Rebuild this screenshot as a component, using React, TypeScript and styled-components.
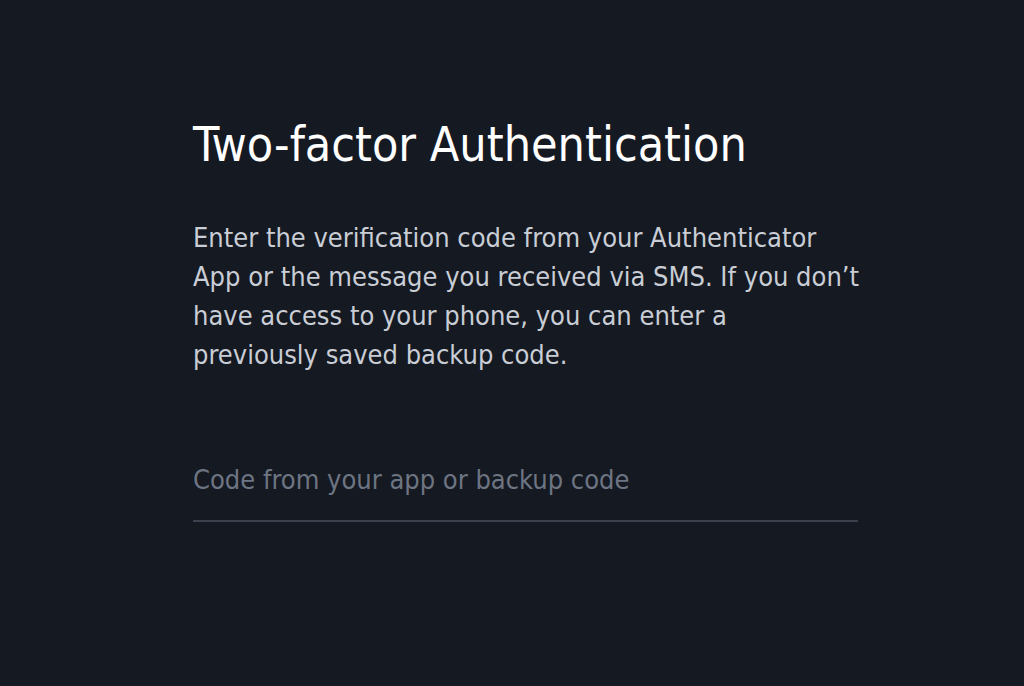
import React from "react";
import styled, { createGlobalStyle } from "styled-components";

const Global = createGlobalStyle`
  html, body { margin: 0; padding: 0; background: #151922; }
  body { font-family: "DejaVu Sans Condensed", "DejaVu Sans", sans-serif; }
  * { box-sizing: border-box; }
`;

const Page = styled.main`
  min-height: 686px;
  padding: 114px 0 0 193px;
`;

const Panel = styled.section`
  width: 665px;
  display: flex;
  flex-direction: column;
`;

const Title = styled.h1`
  margin: 0;
  font-size: 48px;
  line-height: 60px;
  font-weight: 400;
  color: #ffffff;
`;

const Description = styled.p`
  margin: 44px 0 0;
  font-size: 27px;
  line-height: 39px;
  color: #c9cdd5;
  white-space: nowrap;
`;

const CodeInput = styled.input`
  margin-top: 89px;
  width: 100%;
  background: transparent;
  border: none;
  border-bottom: 2px solid #3b404d;
  padding: 0 0 23px;
  font-family: inherit;
  font-size: 27px;
  line-height: 34px;
  color: #e6e8ec;
  outline: none;
  &::placeholder { color: #6d7582; }
`;

export default function App() {
  return (
    <>
      <Global />
      <Page>
        <Panel>
          <Title>Two-factor Authentication</Title>
          <Description>
            Enter the verification code from your Authenticator
            <br />
            App or the message you received via SMS. If you don’t
            <br />
            have access to your phone, you can enter a
            <br />
            previously saved backup code.
          </Description>
          <CodeInput placeholder="Code from your app or backup code" />
        </Panel>
      </Page>
    </>
  );
}
